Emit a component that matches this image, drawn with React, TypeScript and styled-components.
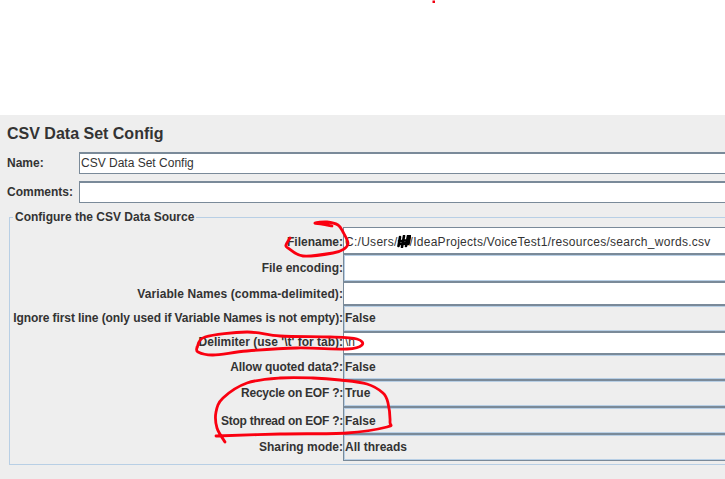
import React from "react";
import styled, { createGlobalStyle } from "styled-components";

const Global = createGlobalStyle`
  html, body { margin: 0; padding: 0; background: #fff; overflow: hidden; }
  body { width: 725px; height: 479px; font-family: "Liberation Sans", Arial, sans-serif; }
`;

const Page = styled.div`
  position: relative;
  width: 725px;
  height: 479px;
  overflow: hidden;
  display: flex;
  flex-direction: column;
`;

const TopBlank = styled.div`
  height: 115px;
  flex: none;
  background: #fff;
`;

const Panel = styled.main`
  flex: 1;
  background: #eeeeee;
  color: #333333;
  padding: 9px 0 0 7px;
  width: 800px;
  box-sizing: border-box;
`;

const Title = styled.h1`
  margin: 0 0 8px;
  font-size: 16px;
  line-height: 20px;
  font-weight: 700;
`;

const TopRow = styled.div`
  display: grid;
  grid-template-columns: 72px 1fr;
  align-items: center;
  height: 22px;
  margin-bottom: 7px;
  font-size: 12px;
  font-weight: 700;
`;

const TextBox = styled.div`
  box-sizing: border-box;
  height: 100%;
  background: #fff;
  border: 1px solid #7a8a99;
  border-top-width: 2px;
  padding-left: 1px;
  font-size: 12px;
  font-weight: 400;
  line-height: 19px;
  white-space: nowrap;
`;

const Group = styled.fieldset`
  margin: 0 0 0 2px;
  padding: 3px 0 0 0;
  width: 780px;
  height: 255px;
  box-sizing: border-box;
  border: 1px solid #b8cfe5;
  display: block;
  min-inline-size: auto;
`;

const Legend = styled.legend`
  margin-left: 3px;
  padding: 0 2px;
  font-size: 12px;
  line-height: 14px;
  font-weight: 700;
`;

const Rows = styled.div`
  display: grid;
  grid-template-columns: 333px 1fr;
  grid-template-rows: 27px 28px 23px 27px 22px 26px 27px 27px 27px;
`;

const Label = styled.label<{ $track?: number; $drop?: number }>`
  align-self: center;
  justify-self: end;
  font-size: 12px;
  font-weight: 700;
  white-space: nowrap;
  letter-spacing: ${(p) => p.$track ?? 0}px;
  padding-top: ${(p) => ((p.$drop ?? 0) > 0 ? 2 : 0)}px;
  padding-bottom: ${(p) => ((p.$drop ?? 0) < 0 ? 2 : 0)}px;
`;

const ValueBox = styled.div<{ $editable?: boolean; $bold?: boolean; $inner?: boolean; $drop?: number }>`
  box-sizing: border-box;
  display: flex;
  align-items: center;
  background: ${(p) => (p.$editable ? "#fff" : "#eeeeee")};
  border: 1px solid #7a8a99;
  box-shadow: ${(p) => (p.$inner ? "inset 0 0 0 1px #b8cfe5" : "none")};
  padding-left: 1px;
  padding-top: ${(p) => ((p.$drop ?? 0) > 0 ? 2 : 0)}px;
  padding-bottom: ${(p) => ((p.$drop ?? 0) < 0 ? 2 : 0)}px;
  font-size: 12px;
  font-weight: ${(p) => (p.$bold ? 700 : 400)};
  white-space: nowrap;
`;

const PathText = styled.span`
  letter-spacing: 0.28px;
  display: inline-flex;
  align-items: center;
`;

const Redaction = styled.svg`
  flex: none;
  width: 14px;
  height: 13px;
  margin: 0 -1px 0 -1px;
`;

const Marks = styled.svg`
  position: absolute;
  left: 0;
  top: 0;
  pointer-events: none;
`;

type Row = { label: string; value?: string; editable?: boolean; bold?: boolean; inner?: boolean; track?: number; drop?: number };

const rows: Row[] = [
  { label: "Filename:", editable: true, drop: 1 },
  { label: "File encoding:", value: "", editable: true, inner: true },
  { label: "Variable Names (comma-delimited):", value: "", editable: true, track: 0.09 },
  { label: "Ignore first line (only used if Variable Names is not empty):", value: "False", bold: true, inner: true, track: -0.08, drop: -1 },
  { label: "Delimiter (use '\\t' for tab):", value: "\\n", editable: true, drop: -1 },
  { label: "Allow quoted data?:", value: "False", bold: true, inner: true, track: -0.1 },
  { label: "Recycle on EOF ?:", value: "True", bold: true, inner: true, track: -0.24, drop: -1 },
  { label: "Stop thread on EOF ?:", value: "False", bold: true, inner: true, track: -0.25 },
  { label: "Sharing mode:", value: "All threads", bold: true, inner: true, drop: -1 },
];

function smooth(pts: number[][]): string {
  let d = `M${pts[0][0]} ${pts[0][1]}`;
  for (let i = 0; i < pts.length - 1; i++) {
    const p0 = pts[Math.max(i - 1, 0)];
    const p1 = pts[i];
    const p2 = pts[i + 1];
    const p3 = pts[Math.min(i + 2, pts.length - 1)];
    const c1x = p1[0] + (p2[0] - p0[0]) / 6;
    const c1y = p1[1] + (p2[1] - p0[1]) / 6;
    const c2x = p2[0] - (p3[0] - p1[0]) / 6;
    const c2y = p2[1] - (p3[1] - p1[1]) / 6;
    d += ` C${c1x} ${c1y} ${c2x} ${c2y} ${p2[0]} ${p2[1]}`;
  }
  return d;
}

const filenameLoop = [
  [332, 226], [322, 224], [315, 223], [327, 222], [338, 225], [343, 232], [348, 243], [344, 249],
  [333, 253], [303, 256], [288, 248], [286, 245], [290, 238],
];
const delimiterLoop = [
  [197, 348], [205, 337], [247, 332], [280, 336], [330, 337], [357, 339], [362, 345], [347, 349],
  [297, 348], [247, 351], [213, 355], [198, 352], [197, 347],
];
const eofLoop = [
  [216, 436], [280, 434], [347, 433], [387, 427], [390, 422], [388, 403], [383, 393], [367, 384],
  [340, 380], [313, 378], [280, 378], [247, 383], [223, 398], [216, 412], [217, 428], [225, 442],
];

export default function App() {
  return (
    <Page>
      <Global />
      <TopBlank />
      <Panel>
        <Title>CSV Data Set Config</Title>
        <TopRow>
          <span>Name:</span>
          <TextBox>CSV Data Set Config</TextBox>
        </TopRow>
        <TopRow>
          <span>Comments:</span>
          <TextBox />
        </TopRow>
        <Group>
          <Legend>Configure the CSV Data Source</Legend>
          <Rows>
            {rows.map((r) => (
              <React.Fragment key={r.label}>
                <Label $track={r.track} $drop={r.drop}>{r.label}</Label>
                <ValueBox $editable={r.editable} $bold={r.bold} $inner={r.inner} $drop={r.drop}>
                  {r.value ?? (
                    <PathText>
                      C:/Users/
                      <Redaction viewBox="0 0 14 13" fill="none" stroke="#000" strokeWidth="2.6" strokeLinecap="round">
                        <path d="M3 2 L1.5 11 M7 1 L5 12 M11 1 L9 11 M13 1 L11.5 9 M2 6 L12 5 M3 9 L10 8" />
                      </Redaction>
                      /IdeaProjects/VoiceTest1/resources/search_words.csv
                    </PathText>
                  )}
                </ValueBox>
              </React.Fragment>
            ))}
          </Rows>
        </Group>
      </Panel>
      <Marks width="725" height="479" viewBox="0 0 725 479" fill="none" stroke="#fa0010" strokeWidth="2.8" strokeLinecap="round" strokeLinejoin="round">
        <rect x="432.5" y="0.5" width="2.5" height="2.5" fill="#f00010" stroke="none" />
        <path d={smooth(filenameLoop)} />
        <path d={smooth(delimiterLoop)} />
        <path d={smooth(eofLoop)} />
      </Marks>
    </Page>
  );
}
